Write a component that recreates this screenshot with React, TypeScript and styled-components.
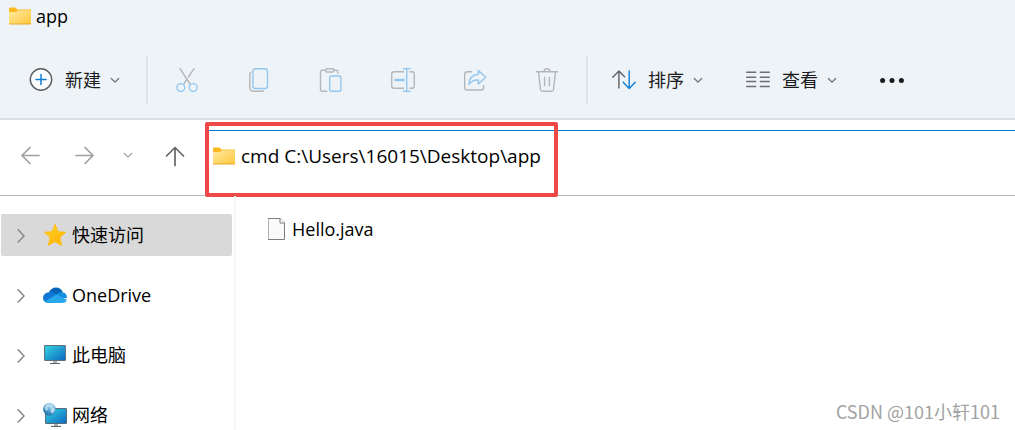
import React from "react";
import styled, { createGlobalStyle } from "styled-components";

const GlobalStyle = createGlobalStyle`
  *, *::before, *::after { box-sizing: border-box; }
  body {
    margin: 0;
    background: #ffffff;
    color: #000000;
    font-family: "Open Sans", "Noto Sans CJK SC", sans-serif;
    font-size: 18px;
    line-height: 24px;
  }
  button, input { font: inherit; color: inherit; }
`;

const Window = styled.div`
  display: flex;
  flex-direction: column;
  height: 100vh;
  overflow: hidden;
`;

const Header = styled.header`
  background: #eef3f8;
  border-bottom: 2px solid #d9dfe4;
`;

const TitleBar = styled.div`
  display: flex;
  align-items: center;
  gap: 5px;
  height: 32px;
  padding-left: 9px;
`;

const Title = styled.h1`
  margin: 0;
  font-size: 18px;
  font-weight: 400;
`;

const Toolbar = styled.div`
  display: flex;
  align-items: center;
  height: 86px;
  padding: 10px 0 0 29px;
`;

const Separator = styled.span`
  width: 2px;
  height: 48px;
  background: #dfe4e8;
`;

const IconGroup = styled.div`
  display: flex;
  gap: 48px;
  padding: 0 27px;
`;

const MenuGroup = styled.div<{ $start: number; $end: number }>`
  display: flex;
  align-items: center;
  gap: 43px;
  padding-left: ${(p) => p.$start}px;
  padding-right: ${(p) => p.$end}px;
`;

const ToolButton = styled.button`
  display: flex;
  align-items: center;
  padding: 0;
  border: 0;
  background: none;
  color: #1b1b1b;
  white-space: nowrap;
`;

const ToolLabel = styled.span`
  margin: 0 9px 0 12px;
`;

const Icon = styled.svg`
  display: block;
  flex: none;
  fill: none;
  stroke-linecap: round;
  stroke-linejoin: round;
`;

const NavRow = styled.div`
  display: flex;
  height: 76px;
  flex: none;
  border-bottom: 1px solid #b9b9b9;
`;

const NavButtons = styled.nav`
  display: flex;
  align-items: center;
  padding: 0 21px 6px 18px;
`;

const NavButton = styled.button<{ $gap?: number }>`
  padding: 0;
  border: 0;
  background: none;
  margin-right: ${(p) => p.$gap ?? 0}px;
`;

const AddressBar = styled.div`
  position: relative;
  flex: 1;
  display: flex;
  align-items: center;
  gap: 6px;
  margin-top: 10px;
  padding: 0 0 15px 5px;
  border-top: 1px solid #0078d4;
`;

const AddressInput = styled.input`
  flex: 1;
  min-width: 0;
  height: 28px;
  padding: 0;
  border: 0;
  outline: 0;
  background: transparent;
  font-size: 19px;
`;

const Highlight = styled.div`
  position: absolute;
  left: -3px;
  top: -9px;
  width: 353px;
  height: 75px;
  border: 4px solid #ef4848;
  border-radius: 2px;
  pointer-events: none;
`;

const Body = styled.div`
  position: relative;
  display: flex;
  flex: 1;
  min-height: 0;
  overflow: hidden;
`;

const Sidebar = styled.aside`
  width: 236px;
  flex: none;
  padding: 18px 2px 0 1px;
  border-right: 2px solid #f5f5f5;
`;

const Tree = styled.ul`
  display: flex;
  flex-direction: column;
  gap: 18px;
  margin: 0;
  padding: 0;
  list-style: none;
`;

const TreeItem = styled.button<{ $active?: boolean }>`
  display: flex;
  align-items: center;
  width: 100%;
  height: 42px;
  padding: 0 0 0 14px;
  border: 0;
  border-radius: 2px;
  background: ${(p) => (p.$active ? "#d9d9d9" : "transparent")};
  text-align: left;

  svg + svg { margin: 0 5px 0 16px; }
`;

const Files = styled.main`
  flex: 1;
  padding: 21px 0 0 32px;
`;

const FileItem = styled.button`
  display: flex;
  align-items: center;
  gap: 6px;
  padding: 0;
  border: 0;
  background: none;
`;

const Watermark = styled.div`
  position: absolute;
  right: 15px;
  bottom: 7px;
  color: #a3a3a3;
  font-family: "Noto Sans CJK SC", sans-serif;
  font-size: 18px;
`;

const GREY = "#b4b7ba";
const BLUE = "#93c7ee";

const Folder = ({ id }: { id: string }) => (
  <Icon width="22" height="18" viewBox="0 0 22 18">
    <defs>
      <linearGradient id={id} x1="0" y1="0" x2="1" y2="1">
        <stop offset="0" stopColor="#ffe9a2" />
        <stop offset="1" stopColor="#ffc83d" />
      </linearGradient>
    </defs>
    <path d="M0 1.5Q0 .5 1 .5H6.5L8.5 2.5H22V8H0Z" fill="#fab91e" />
    <path d="M0 5H7L9 3.3H22V17H0Z" fill={`url(#${id})`} />
    <path d="M0 17H22" stroke="#e5a520" strokeLinecap="butt" />
  </Icon>
);

const Chevron = ({ color = "#6b6d70" }: { color?: string }) => (
  <Icon width="10" height="24" viewBox="0 0 10 24" stroke={color} strokeWidth="1.2">
    <path d="M1.3 10.5 5 14.2 8.7 10.5" />
  </Icon>
);

const New = () => (
  <Icon width="24" height="24" viewBox="0 0 24 24">
    <circle cx="12" cy="11.5" r="10.7" fill="#fbfcfd" stroke="#5b5d60" strokeWidth="1.4" />
    <path d="M12 6.5V16.5M7 11.5H17" stroke="#0f7fd6" strokeWidth="1.5" />
  </Icon>
);

const Cut = () => (
  <Icon width="24" height="24" viewBox="0 0 24 24" strokeWidth="1.4">
    <path d="M5 .7 15 16M19 .7 13.3 9.2M11.3 12.2 9 16" stroke={GREY} />
    <circle cx="5.8" cy="19.5" r="3.9" stroke={BLUE} />
    <circle cx="18.2" cy="19.5" r="3.9" stroke={BLUE} />
  </Icon>
);

const Copy = () => (
  <Icon width="24" height="24" viewBox="0 0 24 24" strokeWidth="1.4">
    <path d="M3.8 4.3Q2.8 4.9 2.8 6V19.5Q2.8 23.3 6.5 23.3H15Q16 23.3 16.6 22.5" stroke={GREY} />
    <rect x="5.9" y=".7" width="14.6" height="19.8" rx="2.6" stroke={BLUE} />
  </Icon>
);

const Paste = () => (
  <Icon width="24" height="24" viewBox="0 0 24 24" strokeWidth="1.4">
    <path d="M6.6 2.3H3Q1.5 2.3 1.5 3.8V21.8Q1.5 23.3 3 23.3H7.8M14.8 2.3H17.2Q18.7 2.3 18.7 3.8V5.3" stroke={GREY} />
    <rect x="6.6" y=".8" width="8.2" height="3.2" rx="1.6" stroke={GREY} />
    <rect x="10.7" y="8" width="11.2" height="15.3" rx="1.8" stroke={BLUE} />
  </Icon>
);

const Rename = () => (
  <Icon width="24" height="24" viewBox="0 0 24 24" strokeWidth="1.4">
    <path d="M12.6 3.7H3Q.7 3.7 .7 6V18Q.7 20.3 3 20.3H12.6M18.8 3.7H21Q23.3 3.7 23.3 6V18Q23.3 20.3 21 20.3H18.8" stroke={GREY} />
    <path d="M12.5 .7H19M12.5 23.3H19M15.7 .7V23.3" stroke={BLUE} />
    <path d="M4.4 12H12.6" stroke={BLUE} strokeWidth="2.4" />
  </Icon>
);

const Share = () => (
  <Icon width="24" height="24" viewBox="0 0 24 24" strokeWidth="1.4">
    <path d="M8.6 3.7H4.3Q1.7 3.7 1.7 6.3V19.4Q1.7 22 4.3 22H18Q20.6 22 20.6 19.4V17.5" stroke={GREY} />
    <path d="M15.4 2.4 22.8 9.3 15.4 16V12.1Q9.5 11.6 6 16.4Q6 7.2 15.4 6.2Z" stroke={BLUE} />
  </Icon>
);

const Trash = () => (
  <Icon width="24" height="24" viewBox="0 0 24 24" strokeWidth="1.4" stroke={GREY}>
    <path d="M1.4 3.8H22.6M9 3.6Q9 .7 12 .7T15 3.6M3.5 4.2 5.5 21.5Q5.7 23.3 7.5 23.3H16.5Q18.3 23.3 18.5 21.5L20.5 4.2M9.6 9.3V17.7M14.4 9.3V17.7" />
  </Icon>
);

const Sort = () => (
  <Icon width="24" height="24" viewBox="0 0 24 24" strokeWidth="1.4">
    <path d="M6.9 20V3.3M.8 9.2 6.9 3 12.6 8.8" stroke="#5f6164" />
    <path d="M17.2 3V20M11.2 14.2 17.2 20.4 23.2 14.2" stroke="#0f7fd6" />
  </Icon>
);

const View = () => (
  <Icon width="24" height="24" viewBox="0 0 24 24" stroke="#6b6d70" strokeWidth="1.4">
    <path d="M.7 4.3H9.7M.7 9.3H9.7M.7 13.5H9.7M.7 18.5H9.7M14.3 4.3H23.3M14.3 9.3H23.3M14.3 13.5H23.3M14.3 18.5H23.3" />
  </Icon>
);

const More = () => (
  <Icon width="24" height="24" viewBox="0 0 24 24">
    <g fill="#1b1b1b">
      <circle cx="2.6" cy="12.4" r="2.5" />
      <circle cx="12" cy="12.4" r="2.5" />
      <circle cx="21.4" cy="12.4" r="2.5" />
    </g>
  </Icon>
);

const Arrow = ({ d, color }: { d: string; color: string }) => (
  <Icon width="24" height="24" viewBox="0 0 24 24" stroke={color} strokeWidth="1.7">
    <path d={d} />
  </Icon>
);

const Expand = () => (
  <Icon width="12" height="16" viewBox="0 0 12 16" stroke="#8a8a8a" strokeWidth="1.6">
    <path d="M3.2 2.8 9 9 3.2 15" />
  </Icon>
);

const Star = () => (
  <Icon width="24" height="24" viewBox="0 0 24 24">
    <defs>
      <linearGradient id="star" x1="0" y1="0" x2="1" y2="1">
        <stop offset="0" stopColor="#ffd629" />
        <stop offset="1" stopColor="#ffae00" />
      </linearGradient>
    </defs>
    <path d="M12 1.5 15 8.7 22.6 9.3 16.8 14.4 18.6 22.3 12 18.6 5.4 22.3 7.2 14.4 1.4 9.3 9 8.7Z" fill="url(#star)" stroke="#ffbd0c" />
  </Icon>
);

const Cloud = () => (
  <Icon width="24" height="24" viewBox="0 0 24 24">
    <path d="M5.6 10Q8 4.5 13 4.5Q18 4.5 19.8 9.5L13.5 14Z" fill="#0364b8" />
    <path d="M6 9.2Q9.5 8.5 12 10.4L16 13 5 20Q0 19.4 0 14.8Q.4 9.7 6 9.2Z" fill="#0f78d4" />
    <path d="M13.4 11.6Q16 9 19.2 9.3Q24 10 24 15L18 15.5Z" fill="#1490df" />
    <path d="M2.2 18.3 13.4 11.6 23.8 16.8Q22.8 20 19.2 20H5.4Q3.3 20 2.2 18.3Z" fill="#28a8ea" />
  </Icon>
);

const ScreenGradient = ({ id }: { id: string }) => (
  <defs>
    <linearGradient id={id} x1="0" y1="0" x2="1" y2="1">
      <stop offset="0" stopColor="#35d6e4" />
      <stop offset="1" stopColor="#0c66bd" />
    </linearGradient>
  </defs>
);

const Computer = () => (
  <Icon width="24" height="24" viewBox="0 0 24 24">
    <ScreenGradient id="pc" />
    <rect x="1.5" y="2.5" width="21" height="15" rx=".5" fill="url(#pc)" stroke="#61707b" />
    <path d="M10 18H14V20H10Z" fill="#a9b2b8" />
    <path d="M7 20.5H17" stroke="#5b6770" strokeLinecap="butt" />
  </Icon>
);

const Network = () => (
  <Icon width="24" height="24" viewBox="0 0 24 24">
    <ScreenGradient id="net" />
    <defs>
      <radialGradient id="globe" cx=".65" cy=".25" r=".8">
        <stop offset="0" stopColor="#c9e9f8" />
        <stop offset=".5" stopColor="#55a6d4" />
        <stop offset="1" stopColor="#246ba2" />
      </radialGradient>
    </defs>
    <rect x="2.5" y="5.5" width="21" height="15" rx=".5" fill="url(#net)" stroke="#536b7b" />
    <path d="M11 21H15V23H11Z" fill="#a9b2b8" />
    <path d="M8 23.4H18" stroke="#4b5962" strokeLinecap="butt" />
    <circle cx="6.5" cy="6.3" r="6.3" fill="url(#globe)" />
    <path d="M1.5 4.5Q3 .8 6 .6L7 2.5 4.5 4.5 5 6.5 2.8 8ZM8.3 6 11.2 4.6 11.6 8 9.2 10.8 7.8 8.6Z" fill="#d4ebf5" fillOpacity=".75" />
  </Icon>
);

const FileIcon = () => (
  <Icon width="18" height="24" viewBox="0 0 18 24">
    <path d="M.5 1.5H12L16.5 6V22.5H.5Z" fill="#fafafa" stroke="#7c7c7c" />
    <path d="M12 1.5V6H16.5" fill="#ffffff" stroke="#7c7c7c" />
  </Icon>
);

const fileActions = [
  { label: "剪切", Glyph: Cut },
  { label: "复制", Glyph: Copy },
  { label: "粘贴", Glyph: Paste },
  { label: "重命名", Glyph: Rename },
  { label: "共享", Glyph: Share },
  { label: "删除", Glyph: Trash },
];

const places = [
  { label: "快速访问", Glyph: Star, active: true },
  { label: "OneDrive", Glyph: Cloud },
  { label: "此电脑", Glyph: Computer },
  { label: "网络", Glyph: Network },
];

const MenuButton = ({ label, Glyph }: { label: string; Glyph: React.FC }) => (
  <ToolButton type="button">
    <Glyph />
    <ToolLabel>{label}</ToolLabel>
    <Chevron />
  </ToolButton>
);

export default function App() {
  return (
    <Window>
      <GlobalStyle />
      <Header>
        <TitleBar>
          <Folder id="titleFolder" />
          <Title>app</Title>
        </TitleBar>
        <Toolbar>
          <MenuGroup $start={0} $end={26}>
            <MenuButton label="新建" Glyph={New} />
          </MenuGroup>
          <Separator />
          <IconGroup>
            {fileActions.map(({ label, Glyph }) => (
              <ToolButton key={label} type="button" aria-label={label}>
                <Glyph />
              </ToolButton>
            ))}
          </IconGroup>
          <Separator />
          <MenuGroup $start={24} $end={0}>
            <MenuButton label="排序" Glyph={Sort} />
            <MenuButton label="查看" Glyph={View} />
            <ToolButton type="button" aria-label="更多">
              <More />
            </ToolButton>
          </MenuGroup>
        </Toolbar>
      </Header>

      <NavRow>
        <NavButtons>
          <NavButton type="button" aria-label="后退" $gap={30}>
            <Arrow color="#a0a0a0" d="M21 12.5H4M12 4.5 4 12.5 12 20.5" />
          </NavButton>
          <NavButton type="button" aria-label="前进" $gap={27}>
            <Arrow color="#a0a0a0" d="M4 12.5H21M13 4.5 21 12.5 13 20.5" />
          </NavButton>
          <NavButton type="button" aria-label="最近的位置" $gap={30}>
            <Chevron color="#a0a0a0" />
          </NavButton>
          <NavButton type="button" aria-label="向上">
            <Arrow color="#666666" d="M12 22.5V4.5M3.5 13 12 4.5 20.5 13" />
          </NavButton>
        </NavButtons>
        <AddressBar>
          <Folder id="addressFolder" />
          <AddressInput aria-label="地址" defaultValue="cmd C:\Users\16015\Desktop\app" />
          <Highlight />
        </AddressBar>
      </NavRow>

      <Body>
        <Sidebar>
          <Tree>
            {places.map(({ label, Glyph, active }) => (
              <li key={label}>
                <TreeItem type="button" $active={active}>
                  <Expand />
                  <Glyph />
                  {label}
                </TreeItem>
              </li>
            ))}
          </Tree>
        </Sidebar>
        <Files>
          <FileItem type="button">
            <FileIcon />
            Hello.java
          </FileItem>
        </Files>
        <Watermark>CSDN @101小轩101</Watermark>
      </Body>
    </Window>
  );
}
